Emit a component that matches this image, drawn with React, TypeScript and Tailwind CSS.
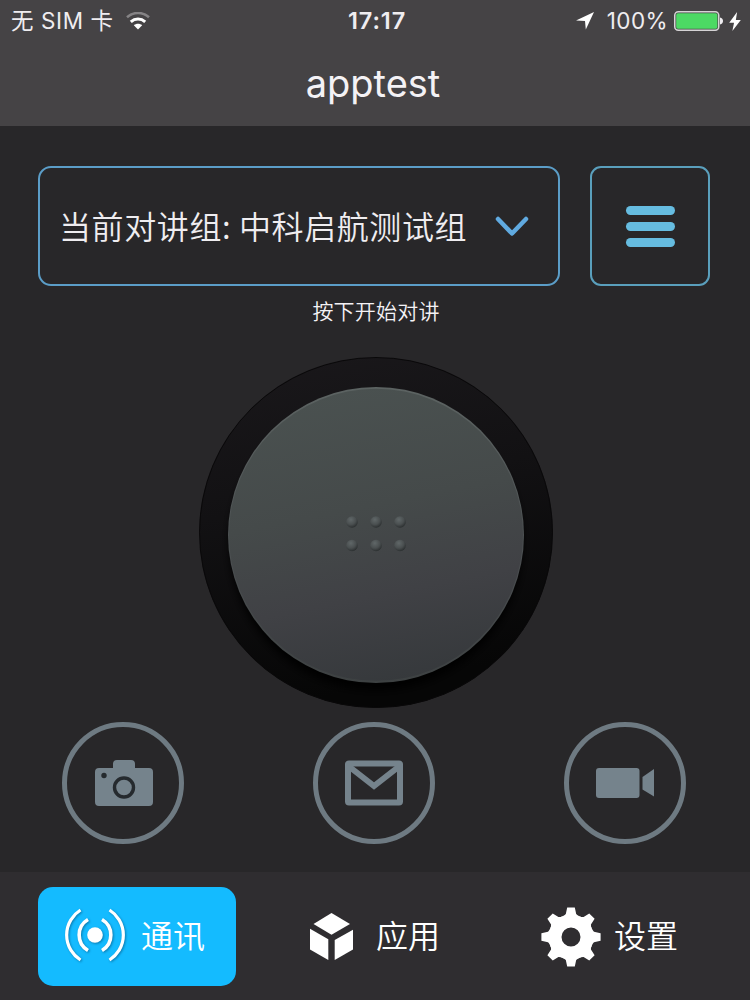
import type { ReactNode } from "react";
import clsx from "clsx";

const toothAngles = [0, 45, 90, 135, 180, 225, 270, 315];

function WifiIcon() {
  return (
    <svg width="24" height="18" viewBox="0 0 24 18" fill="none">
      <path d="M1 5.2C7.4-.4 16.6-.4 23 5.2" stroke="#858385" strokeWidth="2.6" />
      <path d="M4.8 9.8c4.2-3.7 10.2-3.7 14.4 0" stroke="#fff" strokeWidth="3" />
      <path d="M12 17.6l-4.2-4.4c2.4-2 6-2 8.4 0z" fill="#fff" />
    </svg>
  );
}

function StatusBar() {
  return (
    <div className="grid grid-cols-3 h-10 text-[22.5px] leading-10 text-[#efedf0]">
      <div className="flex items-center pl-[11px]">
        <span className="tracking-[0.6px] whitespace-pre">无 SIM 卡</span>
        <span className="ml-3">
          <WifiIcon />
        </span>
      </div>
      <div className="text-center text-[23.5px] font-semibold tracking-[0.9px] pl-1">17:17</div>
      <div className="flex items-center justify-end pr-[9px]">
        <svg width="18" height="18" viewBox="0 0 18 18" className="mr-[13px]">
          <path d="M18 0L9.8 17.5 9 9 0 8.6z" fill="#fff" />
        </svg>
        <span className="mr-1.5 tracking-[0.4px]">100%</span>
        <svg width="49" height="20" viewBox="0 0 49 20" className="mr-[6px]">
          <rect x="0.75" y="0.75" width="44" height="18.5" rx="3.5" fill="none" stroke="#d5d3d5" strokeWidth="1.5" />
          <rect x="2.2" y="2.2" width="41.2" height="15.6" rx="1.8" fill="#4cd964" />
          <path d="M46 6.5c4 .5 4 6.500 0 7z" fill="#efedf0" />
        </svg>
        <svg width="12" height="19" viewBox="0 0 11 18">
          <path d="M7.500 0L0 10.300h4.600L3 18l8-10.500H6.300z" fill="#fff" />
        </svg>
      </div>
    </div>
  );
}

function TalkButton() {
  return (
    <button className="mx-auto mt-[30px] block pl-0.5">
      <svg width="356" height="353" viewBox="198 356 356 353">
        <defs>
          <linearGradient id="well" x1="0" y1="0" x2="0.2" y2="1">
            <stop offset="0" stopColor="#1a181b" />
            <stop offset="0.45" stopColor="#121113" />
            <stop offset="1" stopColor="#060606" />
          </linearGradient>
          <linearGradient id="cap" x1="0.4" y1="0" x2="0.6" y2="1">
            <stop offset="0" stopColor="#4a5150" />
            <stop offset="0.4" stopColor="#454a4a" />
            <stop offset="0.7" stopColor="#404145" />
            <stop offset="1" stopColor="#36393c" />
          </linearGradient>
          <linearGradient id="rim" x1="0" y1="0" x2="0" y2="1">
            <stop offset="0" stopColor="#5c6362" />
            <stop offset="0.6" stopColor="#4a4e50" />
            <stop offset="1" stopColor="#3d4142" />
          </linearGradient>
          <radialGradient id="bump" cx="0.4" cy="0.3" r="0.7">
            <stop offset="0" stopColor="#606768" />
            <stop offset="0.6" stopColor="#4a4f50" />
            <stop offset="1" stopColor="#2c3031" />
          </radialGradient>
          <filter id="drop" x="-20%" y="-20%" width="140%" height="140%">
            <feGaussianBlur stdDeviation="5" />
          </filter>
          <clipPath id="wellClip">
            <ellipse cx="376" cy="532.500" rx="177" ry="175.500" />
          </clipPath>
        </defs>
        <ellipse cx="376" cy="532.500" rx="177" ry="175.500" fill="url(#well)" />
        <g clipPath="url(#wellClip)">
          <ellipse cx="376" cy="532.500" rx="176.500" ry="175" fill="none" stroke="#0a090a" />
          <ellipse cx="376" cy="544" rx="146" ry="146" fill="#000" filter="url(#drop)" />
        </g>
        <circle cx="376" cy="535" r="148" fill="url(#rim)" />
        <ellipse cx="376" cy="534.800" rx="147" ry="146" fill="url(#cap)" />
        {[522, 545.5].map((y) =>
          [352, 376, 400].map((x) => (
            <circle key={`${x}-${y}`} cx={x} cy={y} r="5.800" fill="url(#bump)" />
          ))
        )}
      </svg>
    </button>
  );
}

function ActionButton({ children }: { children: ReactNode }) {
  return (
    <button className="size-[122px] rounded-full border-[5px] border-[#6e7a82] flex items-center justify-center text-[#75838c]">
      {children}
    </button>
  );
}

function CameraIcon() {
  return (
    <svg width="58" height="46" viewBox="0 0 58 46" className="ml-px">
      <path
        d="M4 8h14V4q0-4 4-4h14q4 0 4 4v4h14q4 0 4 4v30q0 4-4 4H4q-4 0-4-4V12q0-4 4-4z"
        fill="currentColor"
      />
      <circle cx="29" cy="27.500" r="9.500" fill="none" stroke="#252a2e" strokeWidth="3.400" />
      <circle cx="9" cy="15.500" r="2.700" fill="#252a2e" />
    </svg>
  );
}

function MailIcon() {
  return (
    <svg width="58" height="46" viewBox="0 0 58 46" fill="none" stroke="currentColor">
      <rect x="3" y="3.500" width="52" height="39" rx="1" strokeWidth="6" />
      <path d="M4 6.500L29 26 54 6.500" strokeWidth="6" />
    </svg>
  );
}

function VideoIcon() {
  return (
    <svg width="58" height="30" viewBox="0 0 58 30" fill="currentColor">
      <rect x="0" y="0" width="43.500" height="30" rx="3" />
      <path d="M46.500 9L58 1v27.500L46.500 21.500z" />
    </svg>
  );
}

function BroadcastIcon() {
  return (
    <svg width="62" height="54" viewBox="0 0 62 54" fill="none" className="-mt-1 drop-shadow-[1px_1px_1px_rgba(0,60,100,0.5)]">
      <circle cx="31" cy="27" r="7.800" fill="#fff" />
      <path d="M24 11.500a18 18 0 0 0 0 31M38 11.500a18 18 0 0 1 0 31" stroke="#fff" strokeWidth="3.600" />
      <path d="M16.500 2a29.500 29.500 0 0 0 0 50M45.500 2a29.500 29.500 0 0 1 0 50" stroke="#fff" strokeWidth="3.200" />
    </svg>
  );
}

function CubeIcon() {
  return (
    <svg width="43" height="48" viewBox="0 0 43 48" fill="#fff">
      <path d="M21.500 0L40 11 21.500 21.800 3.500 11z" />
      <path d="M0 15.800l18.300 10.500V47L0 36.500z" />
      <path d="M43 16.800v19.700L24.700 47V27z" />
    </svg>
  );
}

function GearIcon() {
  return (
    <svg width="60" height="60" viewBox="-30 -30 60 60" fill="#fff">
      {toothAngles.map((angle) => (
        <path
          key={angle}
          d="M-3.800-29.600H3.800L5.200-23Q6.500-21.500 9-20.500H-9Q-6.500-21.500-5.200-23z"
          transform={`rotate(${angle})`}
        />
      ))}
      <circle r="16" fill="none" stroke="#fff" strokeWidth="13" />
    </svg>
  );
}

function TabItem({
  icon,
  label,
  active,
  className,
}: {
  icon: ReactNode;
  label: string;
  active?: boolean;
  className?: string;
}) {
  return (
    <button
      className={clsx(
        "h-[99px] w-[198px] rounded-[15px] flex items-center text-[32px] leading-none font-[350] text-white",
        active && "bg-[#14bbff]",
        className
      )}
    >
      {icon}
      <span>{label}</span>
    </button>
  );
}

export default function App() {
  return (
    <div className="w-[750px] h-[1000px] overflow-hidden flex flex-col bg-[#282729] font-['Inter','Noto_Sans_CJK_SC',sans-serif]">
      <header className="h-[126px] shrink-0 bg-[#454345] pt-px">
        <StatusBar />
        <h1 className="text-center text-[38px] leading-[85px] text-[#f4f2f5] pr-1">apptest</h1>
      </header>

      <main className="h-[746px] shrink-0 pt-10">
        <div className="flex gap-[30px] pl-[38px]">
          <button className="h-[120px] w-[522px] rounded-[13px] border-2 border-[#5b9dc7] flex items-center pl-[19px] text-[#efedf0]">
            <span className="mb-0.5 font-['Noto_Sans_CJK_SC',sans-serif] text-[32px] font-[350] tracking-[0.6px] whitespace-nowrap">
              当前对讲组: 中科启航测试组
            </span>
            <svg width="34" height="21" viewBox="0 0 34 21" className="ml-7" fill="none">
              <path d="M3 3l14 14.500L31 3" stroke="#60aae0" strokeWidth="4.500" strokeLinecap="round" strokeLinejoin="round" />
            </svg>
          </button>
          <button className="h-[120px] w-[120px] rounded-[11px] border-2 border-[#5a9fbc] flex flex-col items-center justify-center gap-[7px]">
            <span className="h-[9px] w-[49px] rounded-full bg-[#66bce0]" />
            <span className="h-[9px] w-[49px] rounded-full bg-[#66bce0]" />
            <span className="h-[9px] w-[49px] rounded-full bg-[#66bce0]" />
          </button>
        </div>
        <p className="mt-3 h-7 pl-0.5 text-center text-[21px] leading-7 font-[350] tracking-[0.2px] text-[#f4f2f5]">
          按下开始对讲
        </p>
        <TalkButton />
        <div className="mt-[13px] flex justify-between pl-[62px] pr-16">
          <ActionButton>
            <CameraIcon />
          </ActionButton>
          <ActionButton>
            <MailIcon />
          </ActionButton>
          <ActionButton>
            <VideoIcon />
          </ActionButton>
        </div>
      </main>

      <footer className="h-32 shrink-0 bg-[#2f2d30] flex pt-[15px] pl-[38px]">
        <TabItem icon={<BroadcastIcon />} label="通讯" active className="pl-[26px] gap-[15px]" />
        <TabItem icon={<CubeIcon />} label="应用" className="ml-[38px] pl-[36px] gap-[23px]" />
        <TabItem icon={<GearIcon />} label="设置" className="ml-[38px] pl-[31px] gap-[13px]" />
      </footer>
    </div>
  );
}
